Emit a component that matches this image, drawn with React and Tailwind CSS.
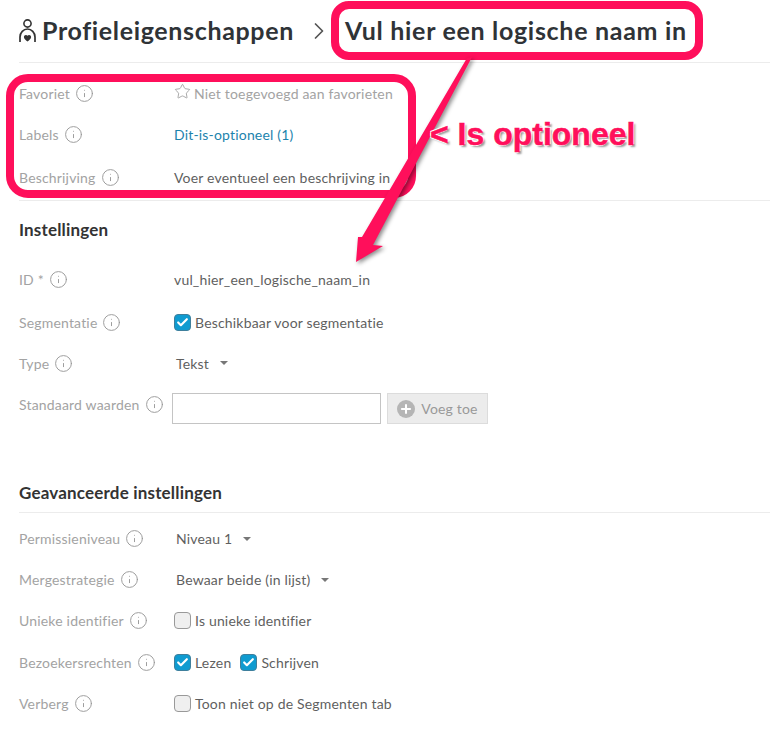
import { Check, ChevronRight, Info, Plus, Star } from 'lucide-react'

const FONT = "font-['Lato','Open_Sans',sans-serif]"

function InfoIcon() {
  return <Info size={19} strokeWidth={1.2} className="ml-[5px] shrink-0 text-[#999]" />
}

function Label({ children, className = '' }) {
  return (
    <div className={`flex w-[155px] shrink-0 items-center text-[14px] text-[#a3a3a3] ${className}`}>
      <span>{children}</span>
      <InfoIcon />
    </div>
  )
}

function Row({ label, height, children }) {
  return (
    <div className="flex items-center" style={{ height }}>
      <Label>{label}</Label>
      {children}
    </div>
  )
}

function Checkbox({ checked }) {
  if (checked) {
    return (
      <span className="flex h-[17px] w-[17px] items-center justify-center rounded-[4px] border border-[#3f7f9c] bg-[#0f9bd0]">
        <Check size={13} strokeWidth={4} className="text-white" />
      </span>
    )
  }
  return <span className="h-[17px] w-[17px] rounded-[4px] border border-[#999] bg-[#efefef]" />
}

function Dropdown({ children }) {
  return (
    <div className="ml-[2px] flex items-center text-[14px] text-[#5f5f5f]">
      <span>{children}</span>
      <span className="ml-[11px] h-0 w-0 border-x-[4px] border-t-[4px] border-x-transparent border-t-[#777]" />
    </div>
  )
}

function CheckOption({ checked, children }) {
  return (
    <div className="flex items-center gap-[4px] text-[14px] text-[#5f5f5f]">
      <Checkbox checked={checked} />
      <span>{children}</span>
    </div>
  )
}

function ProfileIcon() {
  return (
    <svg width="17" height="24" viewBox="0 0 17 24" fill="none" className="shrink-0 text-[#333]">
      <circle cx="8.5" cy="4.5" r="3.6" stroke="currentColor" strokeWidth="1.6" />
      <path d="M1 23v-5C1 13.500 4.500 10 8.500 10S16 13.500 16 18v5" stroke="currentColor" strokeWidth="1.7" />
      <path d="M8.500 22.500c-2-1.500-3.600-2.700-3.600-4.500 0-1.200.9-2.100 2-2.100.7 0 1.200.3 1.600.9.4-.6.900-.9 1.600-.9 1.100 0 2 .9 2 2.100 0 1.800-1.600 3-3.600 4.500z" fill="currentColor" />
    </svg>
  )
}

// pijl en kaders van de annotatie liggen bovenop de pagina
function Annotations() {
  return (
    <>
      <div className="absolute left-[331px] top-[1px] h-[59px] w-[372px] rounded-[18px] border-[8px] border-[#ff0f5b]" />
      <div className="absolute left-[6px] top-[74px] h-[124px] w-[410px] rounded-[22px] border-[8px] border-[#ff0f5b]" />
      <svg width="770" height="742" className="pointer-events-none absolute left-0 top-0 drop-shadow-[2px_2px_2px_rgba(0,0,0,0.45)]">
        <polygon points="467,58 472,57 373,245 383,246 356,262 358,237 362,237" fill="#ff0f5b" />
      </svg>
      <div className="absolute left-[430px] top-[114px] font-['Liberation_Sans',sans-serif] text-[32px] font-bold leading-[40px] tracking-normal whitespace-nowrap text-[#ff0f5b] [-webkit-text-stroke:0.5px_#ff0f5b] [text-shadow:-1px_-1px_0_#fff,1px_-1px_0_#fff,-1px_1px_0_#fff,2px_2px_2px_#999]">
        {'< Is optioneel'}
      </div>
    </>
  )
}

export default function App() {
  return (
    <div className={`relative h-[742px] w-[770px] overflow-hidden bg-white pl-[19px] tracking-[0.18px] ${FONT}`}>
      <header className="flex h-[63px] items-center border-b border-[#ececec]">
        <ProfileIcon />
        <h1 className="ml-[6px] text-[25px] font-bold tracking-[0.65px] text-[#2f3337]">Profieleigenschappen</h1>
        <ChevronRight size={28} strokeWidth={1.5} className="ml-[11px] text-[#555]" />
        <h2 className="ml-[12px] text-[25px] font-bold tracking-[0.7px] text-[#2f3337]">Vul hier een logische naam in</h2>
      </header>

      <section className="border-b border-[#ececec] pt-[9px]">
        <Row label="Favoriet" height={42}>
          <Star size={17} strokeWidth={1} className="mb-[4px] mr-[3px] text-[#888]" />
          <span className="text-[14px] text-[#a3a3a3]">Niet toegevoegd aan favorieten</span>
        </Row>
        <Row label="Labels" height={40}>
          <span className="text-[14px] text-[#1c83ad]">Dit-is-optioneel (1)</span>
        </Row>
        <Row label="Beschrijving" height={46}>
          <span className="text-[14px] text-[#5f5f5f]">Voer eventueel een beschrijving in</span>
        </Row>
      </section>

      <h3 className="mt-[17px] text-[17px] font-bold leading-[24px] text-[#333]">Instellingen</h3>
      <section className="mt-[16px]">
        <Row label="ID *" height={42}>
          <span className="text-[14px] text-[#5f5f5f]">vul_hier_een_logische_naam_in</span>
        </Row>
        <Row label="Segmentatie" height={44}>
          <CheckOption checked>Beschikbaar voor segmentatie</CheckOption>
        </Row>
        <Row label="Type" height={38}>
          <Dropdown>Tekst</Dropdown>
        </Row>
        <div className="flex h-[44px] items-start">
          <Label className="mt-[12px]">Standaard waarden</Label>
          <input className="-ml-[2px] mt-[11px] h-[31px] w-[209px] border border-[#c4c4c4] bg-white" />
          <button className="ml-[6px] mt-[11px] flex h-[31px] w-[101px] items-center justify-center gap-[6px] border border-[#dcdcdc] bg-[#ececec] text-[14px] text-[#999]">
            <span className="flex h-[18px] w-[18px] items-center justify-center rounded-full bg-[#b5b5b5]">
              <Plus size={14} strokeWidth={3.5} className="text-white" />
            </span>
            Voeg toe
          </button>
        </div>
      </section>

      <h3 className="mt-[55px] border-b border-[#ececec] pb-[7px] text-[17px] font-bold leading-[24px] text-[#333]">Geavanceerde instellingen</h3>
      <section className="pt-[5px]">
        <Row label="Permissieniveau" height={41}>
          <Dropdown>Niveau 1</Dropdown>
        </Row>
        <Row label="Mergestrategie" height={41}>
          <Dropdown>Bewaar beide (in lijst)</Dropdown>
        </Row>
        <Row label="Unieke identifier" height={41}>
          <CheckOption>Is unieke identifier</CheckOption>
        </Row>
        <Row label="Bezoekersrechten" height={42}>
          <div className="flex items-center gap-[9px]">
            <CheckOption checked>Lezen</CheckOption>
            <CheckOption checked>Schrijven</CheckOption>
          </div>
        </Row>
        <Row label="Verberg" height={41}>
          <CheckOption>Toon niet op de Segmenten tab</CheckOption>
        </Row>
      </section>
      <Annotations />
    </div>
  )
}
